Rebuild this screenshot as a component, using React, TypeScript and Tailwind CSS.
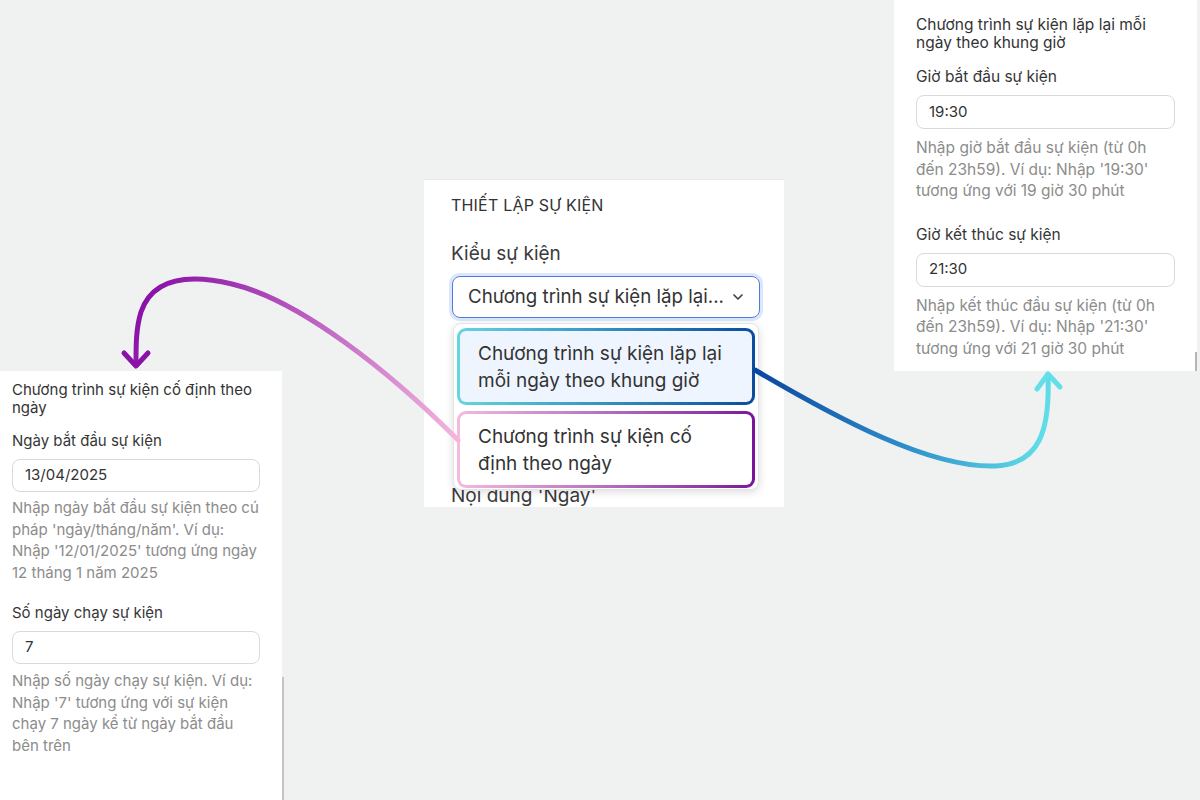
import React from "react";
import { ChevronDown } from "lucide-react";

const font = { fontFamily: "Inter, 'Noto Sans', 'Liberation Sans', sans-serif" };

function Field({
  label,
  value,
  help,
  gapTop,
  inputH,
  helpMt,
  labelSize,
  helpSize,
}: {
  label: string;
  value: string;
  help: string[];
  gapTop: string;
  inputH: string;
  helpMt: string;
  labelSize: string;
  helpSize: string;
}) {
  return (
    <div className={gapTop}>
      <div className={`${labelSize} leading-[20px] text-[#363636]`}>{label}</div>
      <div className={`mt-[8px] ${inputH} rounded-[8px] border border-[#d9d9d9] bg-white flex items-center px-[12px] text-[15px] text-[#333]`}>
        {value}
      </div>
      <div className={`${helpMt} ${helpSize} leading-[21.5px] text-[#8c8c8c]`}>
        {help.map((h, i) => (
          <div key={i} className="whitespace-nowrap">{h}</div>
        ))}
      </div>
    </div>
  );
}

export default function App() {
  return (
    <div className="relative w-[1200px] h-[800px] overflow-hidden bg-[#f0f2f2]" style={font}>
      {/* Left panel */}
      <div className="absolute left-0 top-[371px] w-[282px] h-[429px] bg-white pl-[12px] pt-[10px] pr-[22px]">
        <div className="text-[15px] leading-[18px] text-[#333]">
          <div className="whitespace-nowrap">Chương trình sự kiện cố định theo</div>
          <div>ngày</div>
        </div>
        <Field
          gapTop="mt-[14px]"
          inputH="h-[33px]"
          helpMt="mt-[5px]"
          labelSize="text-[15px]"
          helpSize="text-[15px]"
          label="Ngày bắt đầu sự kiện"
          value="13/04/2025"
          help={[
            "Nhập ngày bắt đầu sự kiện theo cú",
            "pháp 'ngày/tháng/năm'. Ví dụ:",
            "Nhập '12/01/2025' tương ứng ngày",
            "12 tháng 1 năm 2025",
          ]}
        />
        <Field
          gapTop="mt-[20px]"
          inputH="h-[33px]"
          helpMt="mt-[6px]"
          labelSize="text-[15px]"
          helpSize="text-[15px]"
          label="Số ngày chạy sự kiện"
          value="7"
          help={[
            "Nhập số ngày chạy sự kiện. Ví dụ:",
            "Nhập '7' tương ứng với sự kiện",
            "chạy 7 ngày kể từ ngày bắt đầu",
            "bên trên",
          ]}
        />
        <div className="absolute right-[-2px] top-[306px] w-[2px] h-[123px] bg-[#c4c4c4]" />
      </div>

      {/* Right panel */}
      <div className="absolute left-[894px] top-0 w-[303px] h-[371px] bg-white pl-[22px] pt-[16px] pr-[22px]">
        <div className="text-[15.5px] leading-[18px] text-[#333]">
          <div className="whitespace-nowrap">Chương trình sự kiện lặp lại mỗi</div>
          <div>ngày theo khung giờ</div>
        </div>
        <Field
          gapTop="mt-[15px]"
          inputH="h-[34px]"
          helpMt="mt-[8px]"
          labelSize="text-[15.5px]"
          helpSize="text-[15.5px]"
          label="Giờ bắt đầu sự kiện"
          value="19:30"
          help={[
            "Nhập giờ bắt đầu sự kiện (từ 0h",
            "đến 23h59). Ví dụ: Nhập '19:30'",
            "tương ứng với 19 giờ 30 phút",
          ]}
        />
        <Field
          gapTop="mt-[23px]"
          inputH="h-[34px]"
          helpMt="mt-[8px]"
          labelSize="text-[15.5px]"
          helpSize="text-[15.5px]"
          label="Giờ kết thúc sự kiện"
          value="21:30"
          help={[
            "Nhập kết thúc đầu sự kiện (từ 0h",
            "đến 23h59). Ví dụ: Nhập '21:30'",
            "tương ứng với 21 giờ 30 phút",
          ]}
        />
        <div className="absolute right-0 top-[352px] w-[2px] h-[19px] bg-[#b5b5b5]" />
      </div>

      {/* Center panel */}
      <div className="absolute left-[424px] top-[179px] w-[360px] h-[328px] overflow-hidden bg-white border-t border-[#e6e8e8] pl-[27px] pt-[15px] pr-[23px]">
        <div className="text-[16px] leading-[20px] tracking-[0.2px] text-[#333]">THIẾT LẬP SỰ KIỆN</div>
        <div className="mt-[27px] text-[19px] leading-[24px] text-[#3a3a3a]">Kiểu sự kiện</div>
        <div className="mt-[10px] ml-[1px] w-[308px] h-[42px] rounded-[8px] border-[1.5px] border-[#4f7bd8] ring-[3px] ring-[#d9e6fb] flex items-center justify-between pl-[15px] pr-[13px]">
          <span className="text-[18.7px] text-[#333] whitespace-nowrap">Chương trình sự kiện lặp lại...</span>
          <ChevronDown size={16} strokeWidth={2.6} className="text-[#444]" />
        </div>
        <div className="mt-[166px] text-[19px] leading-[24px] text-[#3a3a3a]">Nội dung 'Ngày'</div>

        {/* Dropdown menu */}
        <div className="absolute left-[29px] top-[143px] w-[306px] h-[167px] rounded-[8px] bg-white shadow-[0_2px_8px_rgba(0,0,0,0.14)] border border-[#e5e5e5] px-[3px] pt-[4px] flex flex-col gap-[6px]">
          <div className="h-[77px] rounded-[9px] p-[3px] bg-linear-to-r from-[#65d6e0] to-[#0b4c9e]">
            <div className="h-full rounded-[6px] bg-[#eef5fe] flex flex-col justify-center pl-[18px] text-[19px] leading-[27px] text-[#333]">
              <div className="whitespace-nowrap">Chương trình sự kiện lặp lại</div>
              <div className="whitespace-nowrap">mỗi ngày theo khung giờ</div>
            </div>
          </div>
          <div className="h-[77px] rounded-[9px] p-[3px] bg-linear-to-r from-[#f5bade] to-[#7a129b]">
            <div className="h-full rounded-[6px] bg-white flex flex-col justify-center pl-[18px] text-[19px] leading-[27px] text-[#333]">
              <div className="whitespace-nowrap">Chương trình sự kiện cố</div>
              <div className="whitespace-nowrap">định theo ngày</div>
            </div>
          </div>
        </div>
      </div>

      {/* Arrows */}
      <svg className="absolute left-0 top-0 pointer-events-none" width="1200" height="800" viewBox="0 0 1200 800">
        <defs>
          <linearGradient id="purpleG" gradientUnits="userSpaceOnUse" x1="458" y1="440" x2="150" y2="290">
            <stop offset="0" stopColor="#f4b6dc" />
            <stop offset="0.5" stopColor="#c067c4" />
            <stop offset="1" stopColor="#8a12a8" />
          </linearGradient>
          <linearGradient id="blueG" gradientUnits="userSpaceOnUse" x1="755" y1="370" x2="1050" y2="420">
            <stop offset="0" stopColor="#0a469f" />
            <stop offset="0.55" stopColor="#2f8fca" />
            <stop offset="1" stopColor="#62dfe8" />
          </linearGradient>
        </defs>
        <path
          d="M 458 440 C 390 372, 300 300, 232 284 C 185 273, 152 280, 141 312 C 136 328, 136 345, 136 364"
          fill="none"
          stroke="url(#purpleG)"
          strokeWidth="5"
          strokeLinecap="round"
        />
        <path d="M 124 353 L 136 366 L 148 353" fill="none" stroke="#8a12a8" strokeWidth="5" strokeLinecap="round" strokeLinejoin="round" />
        <path
          d="M 755 370 C 840 420, 930 468, 995 466 C 1040 464, 1050 430, 1048 376"
          fill="none"
          stroke="url(#blueG)"
          strokeWidth="5"
          strokeLinecap="round"
        />
        <path d="M 1037 389 L 1048 374 L 1060 387" fill="none" stroke="#62dfe8" strokeWidth="5" strokeLinecap="round" strokeLinejoin="round" />
      </svg>
    </div>
  );
}
